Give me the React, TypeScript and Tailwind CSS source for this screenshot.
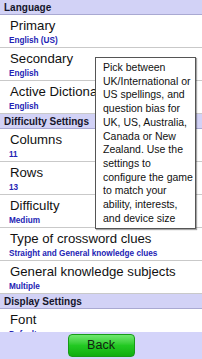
import React from "react";

type Row = { kind: "header"; label: string } | { kind: "item"; title: string; sub: string };

const rows: Row[] = [
  { kind: "header", label: "Language" },
  { kind: "item", title: "Primary", sub: "English (US)" },
  { kind: "item", title: "Secondary", sub: "English" },
  { kind: "item", title: "Active Dictionary", sub: "English" },
  { kind: "header", label: "Difficulty Settings" },
  { kind: "item", title: "Columns", sub: "11" },
  { kind: "item", title: "Rows", sub: "13" },
  { kind: "item", title: "Difficulty", sub: "Medium" },
  { kind: "item", title: "Type of crossword clues", sub: "Straight and General knowledge clues" },
  { kind: "item", title: "General knowledge subjects", sub: "Multiple" },
  { kind: "header", label: "Display Settings" },
  { kind: "item", title: "Font", sub: "Default" },
];

const tipLines = [
  "Pick between",
  "UK/International or",
  "US spellings, and",
  "question bias for",
  "UK, US, Australia,",
  "Canada or New",
  "Zealand. Use the",
  "settings to",
  "configure the game",
  "to match your",
  "ability, interests,",
  "and device size",
];

export default function App() {
  return (
    <div
      className="relative w-[202px] h-[359px] flex flex-col bg-white overflow-hidden"
      style={{ fontFamily: '"Liberation Sans", Arial, sans-serif' }}
    >
      <div className="flex-1 overflow-hidden flex flex-col">
        {rows.map((r, i) =>
          r.kind === "header" ? (
            <div
              key={i}
              className="shrink-0 h-[15px] bg-[#d2d2f6] border-b border-[#a9a9d2] pl-[4px] pt-[1px] text-[10px] leading-[13px] font-bold text-[#15152a] whitespace-nowrap"
            >
              {r.label}
            </div>
          ) : (
            <div
              key={i}
              className="shrink-0 h-[33px] border-b border-[#c9c9c9] pl-[10px] pt-[3px] whitespace-nowrap overflow-hidden"
            >
              <div className="text-[13.2px] leading-[16px] text-[#111111]">{r.title}</div>
              <div className="mt-[2px] pl-[0px] -ml-[1px] text-[8.2px] leading-[10px] font-bold text-[#2323b4]">
                {r.sub}
              </div>
            </div>
          )
        )}
      </div>
      <div className="shrink-0 h-[27px] bg-[#d4d4fa] flex items-center justify-center">
        <div className="w-[67px] h-[23px] rounded-[4px] border border-[#179a17] bg-gradient-to-b from-[#6ee86e] via-[#22c922] to-[#0fae0f] flex items-center justify-center text-[12.5px] text-[#112211]">
          Back
        </div>
      </div>
      <div className="absolute left-[95px] top-[57px] w-[101px] h-[172px] bg-white border border-[#555555] shadow-[1px_1px_1px_rgba(0,0,0,0.35)] pl-[7px] pt-[3px]">
        {tipLines.map((l, i) => (
          <div key={i} className="text-[10.5px] leading-[13.7px] text-[#111111] whitespace-nowrap">
            {l}
          </div>
        ))}
      </div>
    </div>
  );
}
